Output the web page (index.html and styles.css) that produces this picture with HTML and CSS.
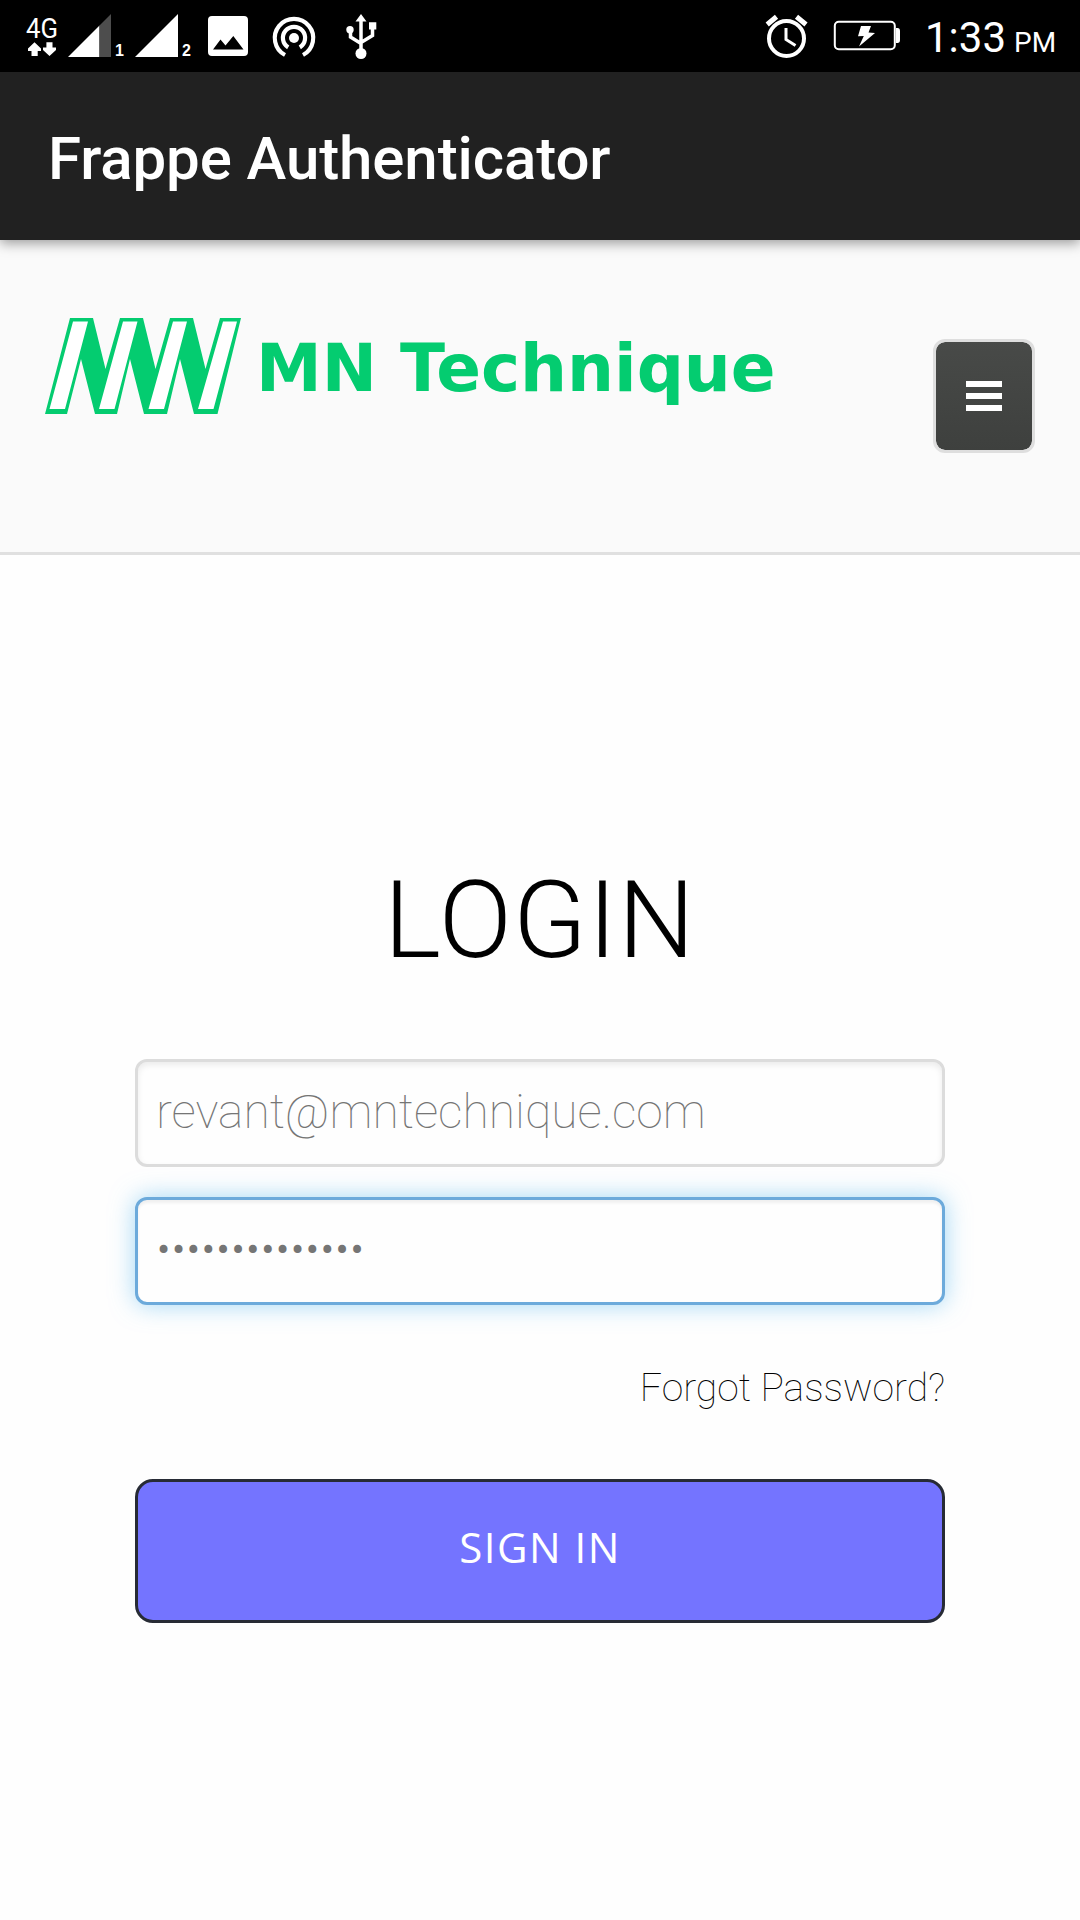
FILE: index.html
```html
<!DOCTYPE html>
<html lang="en">
<head>
<meta charset="utf-8">
<title>Frappe Authenticator</title>
<link rel="stylesheet" href="styles.css">
</head>
<body>
<div class="status-bar">
  <svg class="status-icons" width="400" height="72" viewBox="0 0 400 72" fill="#fff">
    <text class="net-label" x="26" y="37.5" textLength="32" lengthAdjust="spacingAndGlyphs">4G</text>
    <path d="M34.500 42.300L41 48.500V51H37.700V56H31.500V51H28V48.500Z M49.500 56L43 50V47.500H46.400V42.300H52.500V47.500H56V50Z"/>
    <path d="M68 57L99.500 25.500V57Z"/>
    <path fill="#4d4d4d" d="M99.500 25.500L111 14V57H99.500Z"/>
    <text class="sim-label" x="115" y="56">1</text>
    <path d="M135 57L178 14V57Z"/>
    <text class="sim-label" x="182" y="56">2</text>
    <path fill-rule="evenodd" d="M212 16H244Q248 16 248 20V52Q248 56 244 56H212Q208 56 208 52V20Q208 16 212 16ZM213 49.500H243.500L233.300 36L225.500 45.500L220.500 39.500Z"/>
    <circle cx="294" cy="38" r="5"/>
    <g fill="none" stroke="#fff" stroke-width="4.200">
      <path d="M285 55A19.200 19.200 0 1 1 303 55"/>
      <path d="M288.200 47.400A11.100 11.100 0 1 1 299.800 47.400"/>
    </g>
    <path d="M361 14L366.500 21.500H355.500ZM369 22.300H376.300V29.500H369Z"/>
    <circle cx="350" cy="29.800" r="3.700"/>
    <circle cx="361" cy="53.500" r="5.500"/>
    <path fill="none" stroke="#fff" stroke-width="3.500" d="M361 20V52M350.500 30V37L361 43.500M372.500 28V35.500L361 42.500"/>
  </svg>
  <div class="status-right">
    <svg width="160" height="72" viewBox="764 0 160 72" fill="none" stroke="#fff">
      <circle cx="786.500" cy="38.500" r="17.500" stroke-width="4"/>
      <path stroke-width="3" d="M786 28V39.500L795.500 45.500"/>
      <path stroke-width="5" d="M767.200 24.500L776.500 16.800M796.500 16.800L806 24.500"/>
      <rect x="834.800" y="21.800" width="60" height="27.500" rx="4" stroke-width="2"/>
      <path fill="#fff" stroke="none" d="M896 28H897.500Q900 28 900 31V40Q900 43 897.500 43H896Z M861 26H871L868.500 32.500L875 33L859 46.500L863.800 36L858 36.300Z"/>
    </svg>
    <span class="clock">1:33</span><span class="meridiem">PM</span>
  </div>
</div>
<header class="app-bar"><h1>Frappe Authenticator</h1></header>
<nav class="site-header">
  <svg class="logo" width="735" height="96" viewBox="0 0 735 96">
    <path fill="#04cc70" d="M25 0H48L60.500 51L75 0H98L110.500 51L125 0H148L160.500 51L175 0H196L172.500 96H149L135 41L122 96H99L85 41L72 96H50L36 41L22 96H0Z"/>
    <path fill="#fff" d="M28 3.500H43L20 91H4.500ZM78 3.500H92.500L69.500 91H54ZM128 3.500H142L119 91H103.500ZM178 3.500H192L168.500 91H153Z"/>
    <text class="logo-text" x="211" y="73">MN Technique</text>
  </svg>
  <button class="menu-button" aria-label="Menu"><span></span><span></span><span></span></button>
</nav>
<main class="login">
  <h2>LOGIN</h2>
  <form class="login-form">
    <input class="field" type="email" value="revant@mntechnique.com">
    <input class="field field-active" type="password" value="authenticator1">
    <a class="forgot">Forgot Password?</a>
    <button class="sign-in" type="button">SIGN IN</button>
  </form>
</main>
</body>
</html>
```

FILE: styles.css
```css
* { box-sizing: border-box; }

body {
  margin: 0;
  height: 1920px;
  overflow: hidden;
  background: #fefefe;
  font-family: Roboto, sans-serif;
}

.status-bar {
  height: 72px;
  display: flex;
  justify-content: space-between;
  background: #000;
  color: #fff;
}

.status-right {
  display: flex;
  align-items: baseline;
  width: 316px;
}

.status-right svg { flex: none; align-self: flex-start; }
.clock { font-size: 42px; line-height: 75px; margin-left: 1px; }
.meridiem { font-size: 28px; margin-left: 8px; }
.net-label { font-size: 28px; font-weight: 400; }
.sim-label { font: bold 16px "Liberation Sans", sans-serif; }

.app-bar {
  position: relative;
  height: 168px;
  padding: 6px 0 0 48px;
  display: flex;
  align-items: center;
  background: #212121;
  box-shadow: 0 3px 12px rgba(0, 0, 0, .4);
}

.app-bar h1 {
  margin: 0;
  color: #fff;
  font-size: 60px;
  font-weight: 500;
  line-height: 72px;
  letter-spacing: -.1px;
}

.site-header {
  height: 315px;
  padding: 78px 45px 0;
  display: flex;
  justify-content: space-between;
  align-items: flex-start;
  background: #fafafa;
  border-bottom: 3px solid #e0e0e0;
}

.logo { overflow: visible; }

.logo-text {
  fill: #04cc70;
  font: bold 66px "DejaVu Sans", sans-serif;
}

.menu-button {
  width: 102px;
  height: 114px;
  margin-top: 21px;
  padding: 0;
  display: flex;
  flex-direction: column;
  align-items: center;
  justify-content: center;
  gap: 6px;
  border: 3px solid #dedede;
  border-radius: 12px;
  background: linear-gradient(#484a48, #3e403e) padding-box;
}

.menu-button span { width: 36px; height: 6px; background: #fff; }

.login {
  padding: 302px 135px 0;
  display: flex;
  flex-direction: column;
}

.login h2 {
  margin: 0;
  height: 202px;
  text-align: center;
  color: #000;
  font-size: 108px;
  font-weight: 300;
  line-height: 127px;
  letter-spacing: 1.200px;
}

.login-form { display: flex; flex-direction: column; }

.field {
  height: 108px;
  margin: 0 0 30px;
  padding: 0 18px 3px;
  border: 3px solid #dcdcdc;
  border-radius: 12px;
  outline: none;
  background: #fefefe;
  box-shadow: inset 0 3px 6px rgba(0, 0, 0, .08);
  color: #757575;
  font-family: Roboto, sans-serif;
  font-size: 48px;
  font-weight: 100;
}

.field-active {
  border-color: #6caadb;
  box-shadow: inset 0 3px 3px rgba(0, 0, 0, .06), 0 0 24px rgba(102, 190, 240, .6);
}

.forgot {
  margin-top: 30px;
  align-self: flex-end;
  color: #000;
  font-size: 39px;
  font-weight: 100;
  line-height: 46px;
}

.sign-in {
  height: 144px;
  margin-top: 68px;
  padding: 0 0 10px;
  border: 3px solid #272b35;
  border-radius: 18px;
  background: #7474ff;
  color: #fff;
  font-family: "Open Sans", sans-serif;
  font-size: 42px;
  letter-spacing: 1.500px;
}
```
